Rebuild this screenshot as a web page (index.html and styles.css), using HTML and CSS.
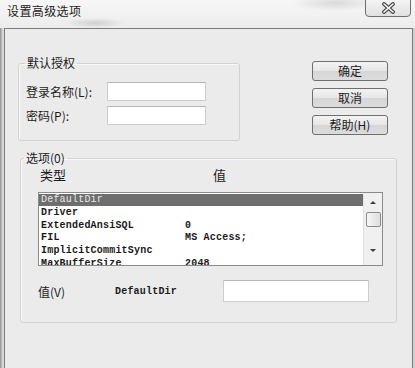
FILE: index.html
```html
<!DOCTYPE html>
<html lang="zh-CN">
<head>
    <meta charset="UTF-8">
    <title>设置高级选项</title>
    <link rel="stylesheet" href="styles.css">
</head>
<body>
    <div class="window">
        <div class="titlebar">
            <span class="title">设置高级选项</span>
            <button class="close-btn">
                <svg width="15" height="12" viewBox="0 0 15 12">
                    <path d="M3 2 L12 10 M12 2 L3 10" stroke="#4a4a4a" stroke-width="3.8" stroke-linecap="round"/>
                    <path d="M3 2 L12 10 M12 2 L3 10" stroke="#fafafa" stroke-width="1.6" stroke-linecap="round"/>
                </svg>
            </button>
        </div>

        <div class="panel">
            <div class="top-row">
                <fieldset class="group auth">
                    <legend>默认授权</legend>
                    <div class="field">
                        <label>登录名称(L):</label>
                        <input type="text" class="textbox">
                    </div>
                    <div class="field">
                        <label>密码(P):</label>
                        <input type="password" class="textbox">
                    </div>
                </fieldset>

                <div class="actions">
                    <button class="button">确定</button>
                    <button class="button">取消</button>
                    <button class="button">帮助(H)</button>
                </div>
            </div>

            <fieldset class="group options">
                <legend>选项(0)</legend>
                <div class="options-body">
                    <div class="list-head">
                        <span class="col-type">类型</span>
                        <span class="col-value">值</span>
                    </div>

                    <div class="listbox">
                        <div class="rows">
                            <div class="row selected"><span class="key">DefaultDir</span><span class="val"></span></div>
                            <div class="row"><span class="key">Driver</span><span class="val"></span></div>
                            <div class="row"><span class="key">ExtendedAnsiSQL</span><span class="val">0</span></div>
                            <div class="row"><span class="key">FIL</span><span class="val">MS Access;</span></div>
                            <div class="row"><span class="key">ImplicitCommitSync</span><span class="val"></span></div>
                            <div class="row"><span class="key">MaxBufferSize</span><span class="val">2048</span></div>
                        </div>
                        <div class="scrollbar">
                            <span class="arrow up"></span>
                            <span class="thumb"></span>
                            <span class="arrow down"></span>
                        </div>
                    </div>

                    <div class="value-row">
                        <span class="value-label">值(V)</span>
                        <span class="value-key">DefaultDir</span>
                        <input type="text" class="textbox value-input">
                    </div>
                </div>
            </fieldset>
        </div>
    </div>
</body>
</html>
```

FILE: styles.css
```css
body {
    margin: 0;
    background-color: #d6d6d6;
    font-family: "Noto Sans CJK SC", "Liberation Sans", sans-serif;
    color: #1c1c1c;
}

.window {
    width: 415px;
    height: 368px;
    background: linear-gradient(to right, #8e8e8e 0, #c9c9c9 2px, #e2e2e2 4px, #e2e2e2 412px, #cfcfcf 413px);
    overflow: hidden;
}

.titlebar {
    height: 28px;
    display: flex;
    justify-content: space-between;
    align-items: flex-start;
    background:
        radial-gradient(ellipse 30px 5px at 95px 23px, rgba(150, 150, 150, 0.35), transparent),
        radial-gradient(ellipse 45px 8px at 335px 3px, rgba(150, 150, 150, 0.3), transparent),
        linear-gradient(#f7f7f7, #ececec);
}

.title {
    margin: 3px 0 0 7px;
    font-size: 12px;
    line-height: 16px;
    letter-spacing: 0.4px;
    color: #222;
}

.close-btn {
    width: 46px;
    height: 18px;
    margin: -1px 4px 0 0;
    padding: 0;
    border: 1px solid #6e6e6e;
    border-radius: 0 0 4px 4px;
    background: linear-gradient(#f4f4f4, #e0e0e0);
    display: flex;
    justify-content: center;
    align-items: center;
}

.panel {
    height: 340px;
    margin: 0 2px 0 4px;
    border: 1px solid #7c7c7c;
    border-bottom: none;
    background-color: #ebebeb;
    box-sizing: border-box;
}

.top-row {
    display: flex;
    align-items: flex-start;
    margin-top: 27px;
    padding-left: 13px;
}

.group {
    margin: 0;
    padding: 0;
    border: 1px solid #d2d2d2;
    border-radius: 3px;
    box-shadow: inset 1px 1px 0 #f8f8f8;
    box-sizing: border-box;
}

.group legend {
    margin-left: 6px;
    padding: 0 2px;
    font-size: 12px;
    line-height: 14px;
}

.auth {
    width: 222px;
    height: 85px;
    padding-top: 12px;
}

.field {
    display: flex;
    align-items: center;
    margin-bottom: 5px;
}

.field label {
    width: 81px;
    padding-left: 7px;
    font-size: 12px;
}

.textbox {
    width: 99px;
    height: 19px;
    margin: 0;
    padding: 0;
    border: 1px solid #cdcdcd;
    border-top-color: #b6b6b6;
    background: #fff;
    box-sizing: border-box;
}

.actions {
    display: flex;
    flex-direction: column;
    gap: 7px;
    margin: 5px 0 0 72px;
}

.button {
    width: 76px;
    height: 20px;
    padding: 0;
    border: 1px solid #6f6f6f;
    border-radius: 3px;
    background: linear-gradient(#f3f3f3 0, #e6e6e6 50%, #d6d6d6 51%, #dcdcdc 100%);
    font-family: "Noto Sans CJK SC", sans-serif;
    font-size: 12px;
    line-height: 16px;
    color: #1c1c1c;
}

.options {
    width: 377px;
    height: 172px;
    margin: 10px 0 0 15px;
    padding: 0;
}

.options legend {
    margin-left: 3px;
}

.options-body {
    padding-left: 17px;
}

.list-head {
    display: flex;
    height: 16px;
    margin-top: 2px;
    font-size: 13px;
    line-height: 16px;
}

.col-type {
    width: 173px;
    padding-left: 2px;
}

.listbox {
    display: flex;
    width: 345px;
    height: 74px;
    margin-top: 9px;
    border: 1px solid #8a8a8a;
    background: #fff;
    box-sizing: border-box;
    overflow: hidden;
}

.rows {
    flex: 1;
    padding-top: 1px;
    font-family: "Liberation Mono", monospace;
    font-size: 10px;
    font-weight: bold;
    letter-spacing: 0.2px;
    color: #1a1a1a;
}

.row {
    display: flex;
    height: 12.75px;
    line-height: 12.75px;
    padding-left: 2px;
    white-space: nowrap;
}

.row.selected {
    height: 12px;
    margin-bottom: 0.75px;
    background-color: #6e6e6e;
    color: #e8e8e8;
    font-weight: normal;
}

.key {
    width: 144px;
}

.scrollbar {
    width: 18px;
    display: flex;
    flex-direction: column;
    align-items: center;
    background: #f0f0f0;
    border-left: 1px solid #e2e2e2;
}

.arrow {
    width: 0;
    height: 0;
    border-left: 3px solid transparent;
    border-right: 3px solid transparent;
}

.arrow.up {
    margin-top: 8px;
    border-bottom: 3px solid #3c3c3c;
}

.arrow.down {
    margin-top: 22px;
    border-top: 3px solid #3c3c3c;
}

.thumb {
    width: 15px;
    height: 15px;
    margin-top: 8px;
    border: 1px solid #8c8c8c;
    border-radius: 2px;
    background: linear-gradient(to right, #f6f6f6, #dedede);
    box-sizing: border-box;
}

.value-row {
    display: flex;
    align-items: center;
    margin-top: 14px;
}

.value-label {
    width: 77px;
    font-size: 12px;
}

.value-key {
    width: 108px;
    font-family: "Liberation Mono", monospace;
    font-size: 10px;
    font-weight: bold;
    letter-spacing: 0.2px;
}

.value-input {
    width: 146px;
    height: 22px;
}
```
